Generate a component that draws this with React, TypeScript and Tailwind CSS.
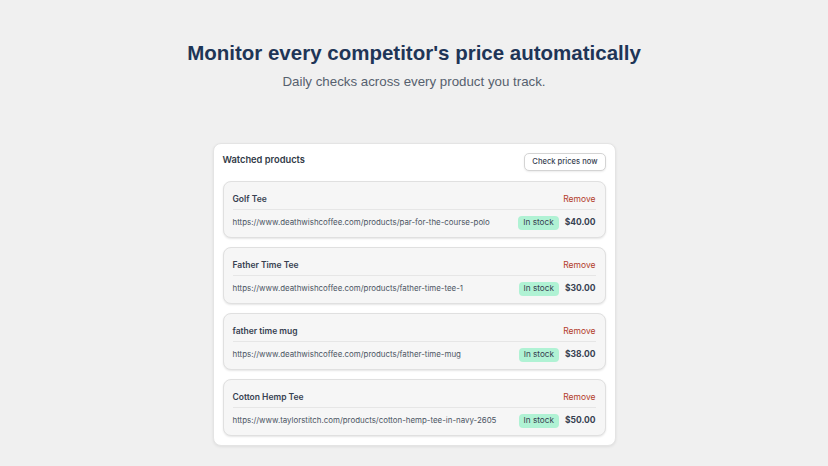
import React from "react";

const items = [
  { name: "Golf Tee", url: "https://www.deathwishcoffee.com/products/par-for-the-course-polo", price: "$40.00" },
  { name: "Father Time Tee", url: "https://www.deathwishcoffee.com/products/father-time-tee-1", price: "$30.00" },
  { name: "father time mug", url: "https://www.deathwishcoffee.com/products/father-time-mug", price: "$38.00" },
  { name: "Cotton Hemp Tee", url: "https://www.taylorstitch.com/products/cotton-hemp-tee-in-navy-2605", price: "$50.00" },
];

export default function App() {
  return (
    <div className="min-h-[466px] w-full bg-[#f0f0f0] flex flex-col items-center pt-[39px]">
      <h1 className="font-['Liberation_Sans',Arial,sans-serif] font-bold text-[20.5px] leading-[28px] text-[#1e3557]">
        Monitor every competitor's price automatically
      </h1>
      <p className="mt-[5px] font-['Liberation_Sans',Arial,sans-serif] text-[13.3px] leading-[20px] text-[#56606e]">
        Daily checks across every product you track.
      </p>
      <div className="mt-[51px] w-[403px] bg-white border border-[#e4e4e4] rounded-[8px] shadow-[0_1px_3px_rgba(0,0,0,0.08)] px-[9px] pt-[9px] pb-[9px] font-['Inter',sans-serif]">
        <div className="flex justify-between items-start mb-[10px]">
          <div className="text-[9.3px] leading-[13px] font-semibold text-[#333b48]">Watched products</div>
          <button className="h-[18px] px-[7px] bg-white border border-[#d4d4d4] rounded-[5px] shadow-[0_1px_2px_rgba(0,0,0,0.08)] text-[7.6px] font-medium text-[#374151] leading-none whitespace-nowrap">
            Check prices now
          </button>
        </div>
        <div className="flex flex-col gap-[9px]">
          {items.map((it) => (
            <div
              key={it.name}
              className="bg-[#f6f6f6] border border-[#e0e0e0] rounded-[8px] shadow-[0_1px_2px_rgba(0,0,0,0.10)] px-[9px] pt-[8px] pb-[8px]"
            >
              <div className="h-[19px] flex items-center justify-between">
                <span className="text-[8.5px] font-semibold text-[#374151]">{it.name}</span>
                <span className="text-[8.5px] text-[#b23b2a]">Remove</span>
              </div>
              <div className="border-t border-[#e6e6e6] pt-[6px] h-[20px] flex items-center justify-between">
                <span className="text-[7.9px] text-[#4b5563] whitespace-nowrap">{it.url}</span>
                <div className="flex items-center gap-[6px] whitespace-nowrap">
                  <span className="h-[14px] px-[5px] rounded-[4px] bg-[#b0f2d4] text-[8.2px] text-[#374151] flex items-center">In stock</span>
                  <span className="text-[8.5px] font-bold text-[#374151]">{it.price}</span>
                </div>
              </div>
            </div>
          ))}
        </div>
      </div>
    </div>
  );
}
